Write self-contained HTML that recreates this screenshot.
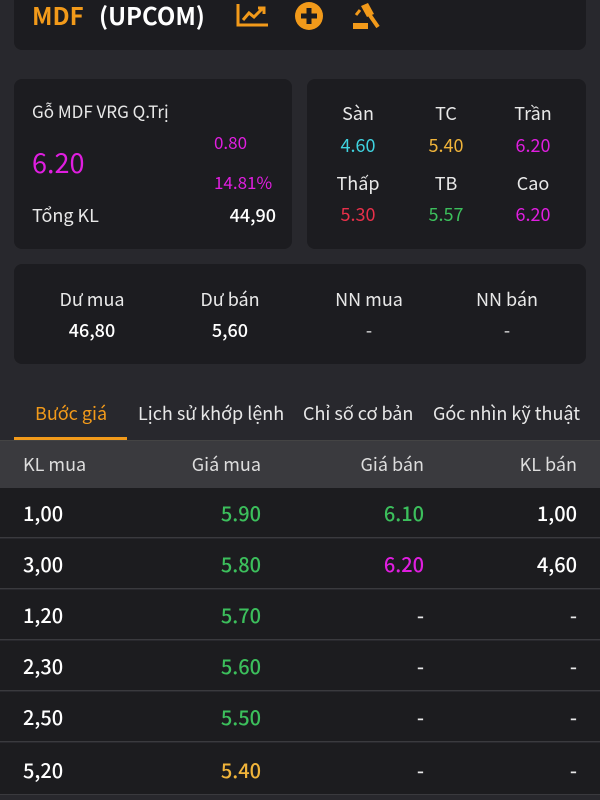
<!DOCTYPE html>
<html><head><meta charset="utf-8"><style>
*{margin:0;padding:0;box-sizing:border-box}
body{width:600px;height:800px;overflow:hidden;background:#28282d;font-family:"Noto Sans CJK JP","Liberation Sans",sans-serif;color:#e8e8e8;position:relative}
.card{position:absolute;background:#1c1c20;border-radius:8px}
.a{position:absolute;white-space:nowrap;line-height:1}
.c{transform:translateX(-50%)}
.r{transform:translateX(-100%)}
.mag{color:#e01ee0}.cy{color:#3fd3e0}.ye{color:#f0b43a}.re{color:#e8304a}.gr{color:#3cbf5c}
.row{position:absolute;left:0;width:600px;height:50px;background:#1c1c1f;border-bottom:1px solid #3a3a3e}
.row span{position:absolute;top:15px;font-size:20px;line-height:1;font-weight:500}
</style></head><body>
<div class="card" style="left:14px;top:-10px;width:572px;height:60px"></div>
<div class="a" style="left:32px;top:3px;font-size:24px;font-weight:700;color:#f29a1a">MDF</div>
<div class="a" style="left:99px;top:3px;font-size:24px;font-weight:700;color:#fff">(UPCOM)</div>
<svg class="a" style="left:236px;top:3px" width="34" height="24" viewBox="0 0 34 24"><path d="M2 1V22H32" stroke="#f29a1a" stroke-width="3" fill="none"/><path d="M7 17L13 10L18 14L27 5M22 5H28V11" stroke="#f29a1a" stroke-width="3" fill="none"/></svg>
<svg class="a" style="left:293px;top:0px" width="32" height="32" viewBox="0 0 32 32"><circle cx="16" cy="16" r="14" fill="#f29a1a"/><path d="M16 8V24M8 16H24" stroke="#1c1c20" stroke-width="5"/></svg>
<svg class="a" style="left:352px;top:2px" width="30" height="28" viewBox="0 0 30 28"><rect x="1" y="21" width="15" height="6" fill="#f29a1a"/><path d="M9 4L16 1L22 12L15 15Z" fill="#f29a1a"/><path d="M17 12L26 25" stroke="#f29a1a" stroke-width="4"/><path d="M4 13L8 8" stroke="#f29a1a" stroke-width="3"/></svg>

<div class="card" style="left:14px;top:79px;width:278px;height:170px"></div>
<div class="a" style="left:32px;top:102px;font-size:17px">Gỗ MDF VRG Q.Trị</div>
<div class="a mag" style="left:32px;top:148px;font-size:27px">6.20</div>
<div class="a mag" style="left:214px;top:133px;font-size:17px">0.80</div>
<div class="a mag" style="left:214px;top:173px;font-size:17px">14.81%</div>
<div class="a" style="left:32px;top:206px;font-size:18px">Tổng KL</div>
<div class="a r" style="left:276px;top:206px;font-size:18px;font-weight:500;color:#fff">44,90</div>

<div class="card" style="left:307px;top:79px;width:279px;height:170px"></div>
<div class="a c" style="left:358px;top:104px;font-size:18px">Sàn</div>
<div class="a c" style="left:446px;top:104px;font-size:18px">TC</div>
<div class="a c" style="left:533px;top:104px;font-size:18px">Trần</div>
<div class="a c cy" style="left:358px;top:136px;font-size:18px">4.60</div>
<div class="a c ye" style="left:446px;top:136px;font-size:18px">5.40</div>
<div class="a c mag" style="left:533px;top:136px;font-size:18px">6.20</div>
<div class="a c" style="left:358px;top:174px;font-size:18px">Thấp</div>
<div class="a c" style="left:446px;top:174px;font-size:18px">TB</div>
<div class="a c" style="left:533px;top:174px;font-size:18px">Cao</div>
<div class="a c re" style="left:358px;top:205px;font-size:18px">5.30</div>
<div class="a c gr" style="left:446px;top:205px;font-size:18px">5.57</div>
<div class="a c mag" style="left:533px;top:205px;font-size:18px">6.20</div>

<div class="card" style="left:14px;top:264px;width:572px;height:100px"></div>
<div class="a c" style="left:92px;top:290px;font-size:18px">Dư mua</div>
<div class="a c" style="left:230px;top:290px;font-size:18px">Dư bán</div>
<div class="a c" style="left:369px;top:290px;font-size:18px">NN mua</div>
<div class="a c" style="left:507px;top:290px;font-size:18px">NN bán</div>
<div class="a c" style="left:92px;top:321px;font-size:18px;font-weight:500;color:#fff">46,80</div>
<div class="a c" style="left:230px;top:321px;font-size:18px;font-weight:500;color:#fff">5,60</div>
<div class="a c" style="left:369px;top:321px;font-size:18px">-</div>
<div class="a c" style="left:507px;top:321px;font-size:18px">-</div>

<div class="a" style="left:35px;top:404px;font-size:18px;color:#f29a1a">Bước giá</div>
<div class="a" style="left:138px;top:404px;font-size:18px">Lịch sử khớp lệnh</div>
<div class="a" style="left:303px;top:404px;font-size:18px">Chỉ số cơ bản</div>
<div class="a" style="left:433px;top:404px;font-size:18px">Góc nhìn kỹ thuật</div>
<div class="a" style="left:14px;top:437px;width:113px;height:3px;background:#f29a1a"></div>
<div class="a" style="left:0;top:440px;width:600px;height:1px;background:#444"></div>
<div class="a" style="left:0;top:441px;width:600px;height:47px;background:#3a3a3e"></div>
<div class="a" style="left:23px;top:455px;font-size:18px;color:#ddd">KL mua</div>
<div class="a r" style="left:261px;top:455px;font-size:18px;color:#ddd">Giá mua</div>
<div class="a r" style="left:424px;top:455px;font-size:18px;color:#ddd">Giá bán</div>
<div class="a r" style="left:577px;top:455px;font-size:18px;color:#ddd">KL bán</div>

<div class="row" style="top:488px"><span style="left:23px;color:#fff">1,00</span><span class="r gr" style="left:261px">5.90</span><span class="r gr" style="left:424px">6.10</span><span class="r" style="left:577px;color:#fff">1,00</span></div>
<div class="row" style="top:539px"><span style="left:23px;color:#fff">3,00</span><span class="r gr" style="left:261px">5.80</span><span class="r mag" style="left:424px">6.20</span><span class="r" style="left:577px;color:#fff">4,60</span></div>
<div class="row" style="top:590px"><span style="left:23px;color:#fff">1,20</span><span class="r gr" style="left:261px">5.70</span><span class="r" style="left:424px">-</span><span class="r" style="left:577px">-</span></div>
<div class="row" style="top:641px"><span style="left:23px;color:#fff">2,30</span><span class="r gr" style="left:261px">5.60</span><span class="r" style="left:424px">-</span><span class="r" style="left:577px">-</span></div>
<div class="row" style="top:692px"><span style="left:23px;color:#fff">2,50</span><span class="r gr" style="left:261px">5.50</span><span class="r" style="left:424px">-</span><span class="r" style="left:577px">-</span></div>
<div class="row" style="top:743px;height:52px"><span style="left:23px;color:#fff;top:17px">5,20</span><span class="r ye" style="left:261px;top:17px">5.40</span><span class="r" style="left:424px;top:17px">-</span><span class="r" style="left:577px;top:17px">-</span></div>
</body></html>
